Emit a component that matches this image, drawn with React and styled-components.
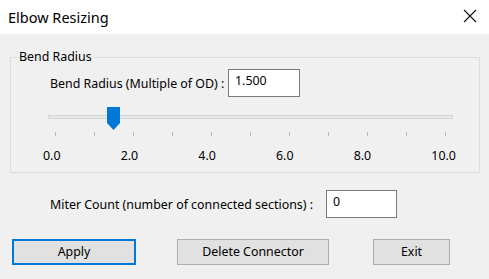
import React from "react";
import styled, { createGlobalStyle } from "styled-components";

const GlobalStyle = createGlobalStyle`
  html, body {
    margin: 0;
    padding: 0;
    background: #f0f0f0;
  }
  body {
    font-family: "Noto Sans", "Open Sans", sans-serif;
    font-size: 12.4px;
    color: #000;
  }
`;

const TICKS = [0, 1, 2, 3, 4, 5, 6, 7, 8, 9, 10];
const LABELS = ["0.0", "2.0", "4.0", "6.0", "8.0", "10.0"];

const CloseIcon = () => (
  <svg width="14" height="14" viewBox="0 0 14 14">
    <path d="M1 1 L13 13 M13 1 L1 13" stroke="#111" strokeWidth="1.1" fill="none" />
  </svg>
);

const ThumbShape = () => (
  <svg width="13" height="23" viewBox="0 0 13 23">
    <path d="M0 0 H13 V16 L6.5 23 L0 16 Z" fill="#0078d7" />
  </svg>
);

const Slider = ({ value, max }) => {
  // thumb travels between the first and last tick
  const pct = value / max;
  return (
    <SliderWrap>
      <SliderBox>
        <Track />
        <Thumb style={{ left: `calc(${pct} * (100% - 14px) + 7px)` }}>
          <ThumbShape />
        </Thumb>
      </SliderBox>
      <TickRow>
        {TICKS.map((t) => (
          <Tick key={t} />
        ))}
      </TickRow>
      <TickLabels>
        {LABELS.map((l) => (
          <span key={l}>{l}</span>
        ))}
      </TickLabels>
    </SliderWrap>
  );
};

const App = () => {
  return (
    <>
      <GlobalStyle />
      <Window>
        <TitleBar>
          <Title>Elbow Resizing</Title>
          <CloseButton>
            <CloseIcon />
          </CloseButton>
        </TitleBar>
        <Body>
          <Group>
            <Legend>Bend Radius</Legend>
            <FieldRow>
              <FieldLabel width={178}>Bend Radius (Multiple of OD) :</FieldLabel>
              <TextBox width={72} defaultValue="1.500" />
            </FieldRow>
            <Slider value={1.5} max={10} />
          </Group>
          <MiterRow>
            <FieldLabel width={276}>Miter Count (number of connected sections) :</FieldLabel>
            <TextBox width={71} defaultValue="0" />
          </MiterRow>
          <ButtonRow>
            <Button width={124} primary>Apply</Button>
            <Button width={152}>Delete Connector</Button>
            <Button width={77} shift={3}>Exit</Button>
          </ButtonRow>
        </Body>
      </Window>
    </>
  );
};

export default App;

const Window = styled.div`
  width: 489px;
  height: 279px;
  background: #f0f0f0;
  overflow: hidden;
`;

const TitleBar = styled.div`
  height: 34px;
  background: #fff;
  display: flex;
  align-items: center;
  justify-content: space-between;
  padding: 0 12px 0 8px;
  box-sizing: border-box;
`;

const Title = styled.div`
  font-size: 14.5px;
  margin-top: -1px;
`;

const CloseButton = styled.div`
  display: flex;
  align-items: center;
  margin-top: -2px;
`;

const Body = styled.div`
  padding-top: 15px;
`;

const Group = styled.fieldset`
  margin: 0 9px 0 10px;
  padding: 4px 26px 8px 37px;
  border: 1px solid #dcdcdc;
  min-width: 0;
`;

const Legend = styled.legend`
  padding: 0 2px;
  margin-left: -31px;
  line-height: 16px;
`;

const FieldRow = styled.div`
  display: flex;
  align-items: center;
  padding-left: 2px;
`;

const MiterRow = styled(FieldRow)`
  padding-left: 50px;
  margin-top: 17px;
`;

const FieldLabel = styled.div`
  width: ${(p) => p.width}px;
  flex-shrink: 0;
  white-space: nowrap;
`;

const TextBox = styled.input`
  width: ${(p) => p.width}px;
  height: 28px;
  box-sizing: border-box;
  border: 1px solid #7a7a7a;
  background: #fff;
  font: inherit;
  padding: 0 6px 6px;
  outline: none;
`;

const SliderWrap = styled.div`
  margin-top: 10px;
`;

const SliderBox = styled.div`
  position: relative;
  height: 23px;
`;

const Track = styled.div`
  position: relative;
  top: 8px;
  height: 4px;
  box-sizing: border-box;
  background: #e7eaea;
  border: 1px solid #d6d6d6;
`;

const Thumb = styled.div`
  position: absolute;
  top: 0;
  width: 13px;
  height: 23px;
  margin-left: -6.5px;
  line-height: 0;
`;

const TickRow = styled.div`
  display: flex;
  justify-content: space-between;
  margin: 2px 7px 0;
  height: 4px;
`;

const Tick = styled.div`
  width: 1px;
  height: 4px;
  background: #b8b8b8;
`;

const TickLabels = styled.div`
  display: flex;
  justify-content: space-between;
  margin: 12px -3px 0 -5px;
  line-height: 16px;
`;

const ButtonRow = styled.div`
  display: flex;
  gap: 41px;
  padding-left: 12px;
  margin-top: 21px;
`;

const Button = styled.button`
  width: ${(p) => p.width}px;
  height: 26px;
  margin-left: ${(p) => p.shift || 0}px;
  box-sizing: border-box;
  background: #e1e1e1;
  border: ${(p) => (p.primary ? "2px solid #0078d7" : "1px solid #adadad")};
  font: inherit;
  color: #000;
  padding: 0 0 2px;
`;
